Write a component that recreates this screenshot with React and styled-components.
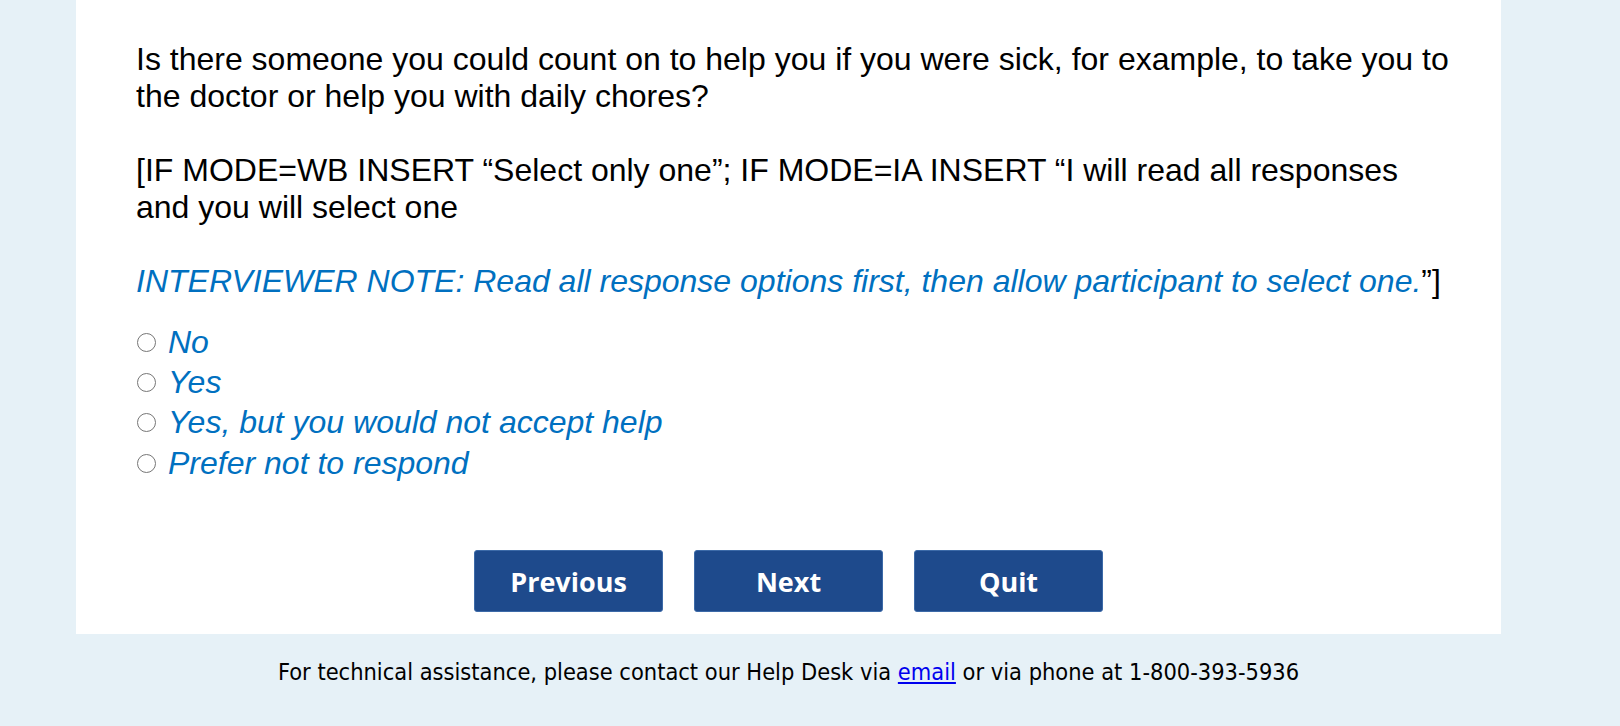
import React, { useState } from 'react';
import styled, { createGlobalStyle } from 'styled-components';

const GlobalStyle = createGlobalStyle`
    html, body {
        margin: 0;
        padding: 0;
        background: #e6f1f7;
    }
    body {
        font-family: "Liberation Sans", Arial, sans-serif;
    }
`;

const Page = styled.div`
    min-height: 726px;
    background: #e6f1f7;
`;

const Card = styled.div`
    margin: 0 119px 0 76px;
    padding: 41px 50px 22px 60px;
    background: #ffffff;
`;

const Question = styled.div`
    font-size: 32px;
    line-height: 37px;
    color: #000000;
`;

const Para = styled.p`
    margin: 0 0 37px;
`;

const Note = styled.p`
    margin: 0;
    font-style: italic;
    color: #0070c0;
`;

const Close = styled.span`
    font-style: normal;
    color: #000000;
`;

const Options = styled.div`
    display: flex;
    flex-direction: column;
    margin-top: 22px;
`;

const Option = styled.label`
    display: flex;
    align-items: center;
    gap: 12px;
    height: 40.3px;
    font-size: 32px;
    font-style: italic;
    color: #0070c0;
    cursor: pointer;
`;

const Radio = styled.input`
    appearance: none;
    width: 19px;
    height: 19px;
    margin: 0 0 0 1px;
    border: 1.5px solid #767676;
    border-radius: 50%;
    background: #ffffff;
    flex: none;
    &:checked {
        box-shadow: inset 0 0 0 4px #ffffff;
        background: #0075ff;
        border-color: #0075ff;
    }
`;

const Actions = styled.div`
    display: flex;
    justify-content: center;
    gap: 31px;
    margin-top: 67px;
    padding-right: 10px;
`;

const NavButton = styled.button`
    width: 189px;
    height: 62px;
    border: 1px solid #3c6aa8;
    border-radius: 3px;
    background: #1e4a8c;
    color: #ffffff;
    font-family: "Open Sans", sans-serif;
    font-weight: 700;
    font-size: 27px;
    cursor: pointer;
`;

const Footer = styled.div`
    padding-top: 24px;
    text-align: center;
    font-family: "DejaVu Sans Condensed", "DejaVu Sans", sans-serif;
    font-size: 23.4px;
    color: #000000;
    padding-right: 43px;
`;

const MailLink = styled.a`
    color: #0000ee;
`;

const options = ['No', 'Yes', 'Yes, but you would not accept help', 'Prefer not to respond'];

const App = () => {
    const [answer, setAnswer] = useState('');

    return (
        <>
            <GlobalStyle />
            <Page>
                <Card>
                    <Question>
                        <Para>
                            Is there someone you could count on to help you if you were sick, for example, to take you to the doctor or help you with daily chores?
                        </Para>
                        <Para>
                            [IF MODE=WB INSERT “Select only one”; IF MODE=IA INSERT “I will read all responses and you will select one
                        </Para>
                        <Note>
                            INTERVIEWER NOTE: Read all response options first, then allow participant to select one.<Close>”]</Close>
                        </Note>
                    </Question>
                    <Options>
                        {options.map((opt) => (
                            <Option key={opt}>
                                <Radio
                                    type="radio"
                                    name="help"
                                    checked={answer === opt}
                                    onChange={() => setAnswer(opt)}
                                />
                                {opt}
                            </Option>
                        ))}
                    </Options>
                    <Actions>
                        <NavButton>Previous</NavButton>
                        <NavButton>Next</NavButton>
                        <NavButton>Quit</NavButton>
                    </Actions>
                </Card>
                <Footer>
                    For technical assistance, please contact our Help Desk via <MailLink href="#">email</MailLink> or via phone at 1-800-393-5936
                </Footer>
            </Page>
        </>
    );
};

export default App;
